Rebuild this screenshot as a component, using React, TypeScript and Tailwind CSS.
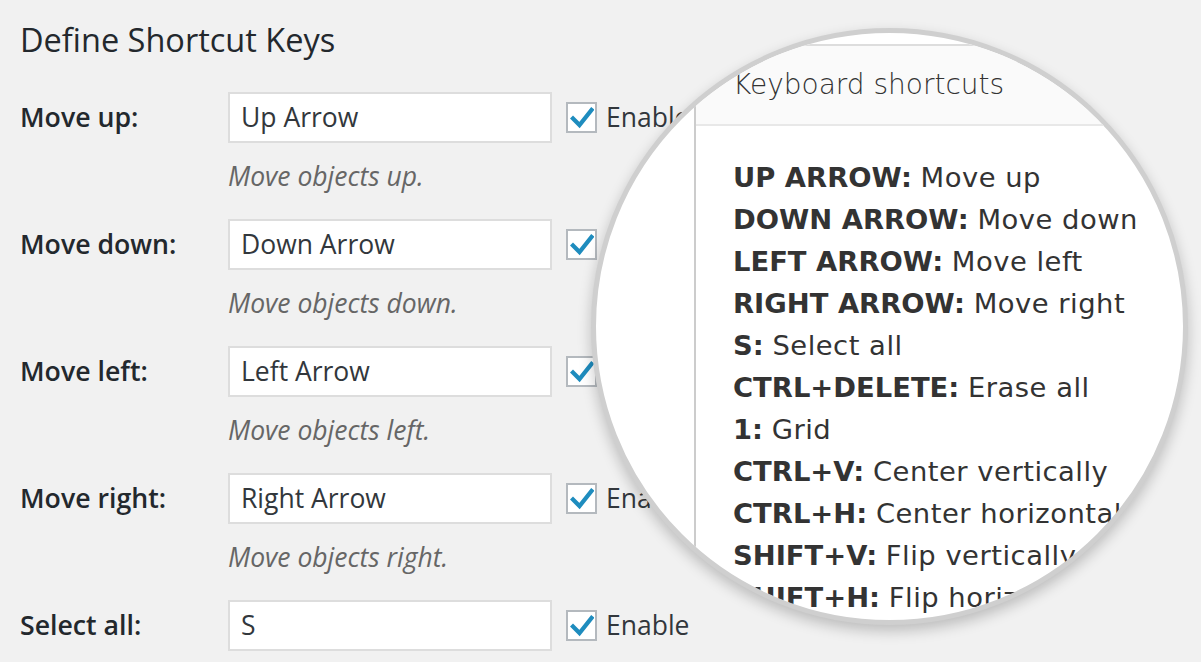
import React from 'react';

type Shortcut = { label: string; value: string; desc: string };

const rows: Shortcut[] = [
  { label: 'Move up:', value: 'Up Arrow', desc: 'Move objects up.' },
  { label: 'Move down:', value: 'Down Arrow', desc: 'Move objects down.' },
  { label: 'Move left:', value: 'Left Arrow', desc: 'Move objects left.' },
  { label: 'Move right:', value: 'Right Arrow', desc: 'Move objects right.' },
  { label: 'Select all:', value: 'S', desc: '' },
];

const keymap: [string, string][] = [
  ['UP ARROW:', 'Move up'],
  ['DOWN ARROW:', 'Move down'],
  ['LEFT ARROW:', 'Move left'],
  ['RIGHT ARROW:', 'Move right'],
  ['S:', 'Select all'],
  ['CTRL+DELETE:', 'Erase all'],
  ['1:', 'Grid'],
  ['CTRL+V:', 'Center vertically'],
  ['CTRL+H:', 'Center horizontally'],
  ['SHIFT+V:', 'Flip vertically'],
  ['SHIFT+H:', 'Flip horizontally'],
];

function Checkbox() {
  return (
    <span className="flex h-[31px] w-[31px] shrink-0 items-center justify-center border-2 border-[#b4b9be] bg-white">
      <svg width="24" height="24" viewBox="0 0 24 24">
        <path d="M3 12.5 L9.5 19 L21.5 4" fill="none" stroke="#1e8cbe" strokeWidth="4.2" strokeLinecap="square" />
      </svg>
    </span>
  );
}

function Row({ item }: { item: Shortcut }) {
  return (
    <div className="mb-[26px]">
      <div className="flex items-center">
        <label className="w-[208px] shrink-0 text-[26.7px] font-semibold text-[#23282d]">{item.label}</label>
        <div className="flex h-[51px] w-[324px] shrink-0 items-center border-2 border-[#dddddd] bg-white pl-[11px] text-[26.5px] text-[#32373c]">
          {item.value}
        </div>
        <div className="ml-[14px] flex items-center gap-[9px]">
          <Checkbox />
          <span className="text-[26.5px] text-[#32373c]">Enable</span>
        </div>
      </div>
      {item.desc && (
        <p className="ml-[208px] mt-[16px] text-[26.5px] leading-[34px] italic text-[#666666]">{item.desc}</p>
      )}
    </div>
  );
}

function Magnifier() {
  return (
    <div className="absolute left-[591px] top-[28px] h-[597px] w-[597px] overflow-hidden rounded-full border-[5px] border-[#cfcfcf] bg-white shadow-[0_6px_14px_rgba(0,0,0,0.22)]">
      <div className="ml-[98px] mt-[11px] w-[700px] border-l-2 border-t-2 border-l-[#cccccc] border-t-[#dddddd] font-['DejaVu_Sans',sans-serif] text-[#333333]">
        <div className="flex h-[80px] items-center border-b-2 border-[#e8e8e8] bg-[#fafafa] pl-[37px] text-[28px] font-light">
          Keyboard shortcuts
        </div>
        <div className="pl-[37px] pt-[31px] pb-[40px]">
          {keymap.map(([k, v]) => (
            <div key={k} className="whitespace-nowrap text-[27.4px] leading-[42px]">
              <span className="font-bold">{k}</span>{' '}
              <span className="tracking-[0.5px]">{v}</span>
            </div>
          ))}
        </div>
      </div>
    </div>
  );
}

export default function App() {
  return (
    <div className="relative h-[662px] w-full overflow-hidden bg-[#f1f1f1] font-['Open_Sans',sans-serif]">
      <div className="pl-[20px] pt-[20px]">
        <h1 className="mb-[32px] text-[32.5px] leading-[40px] text-[#23282d]">Define Shortcut Keys</h1>
        {rows.map((r) => (
          <Row key={r.label} item={r} />
        ))}
      </div>
      <Magnifier />
    </div>
  );
}
